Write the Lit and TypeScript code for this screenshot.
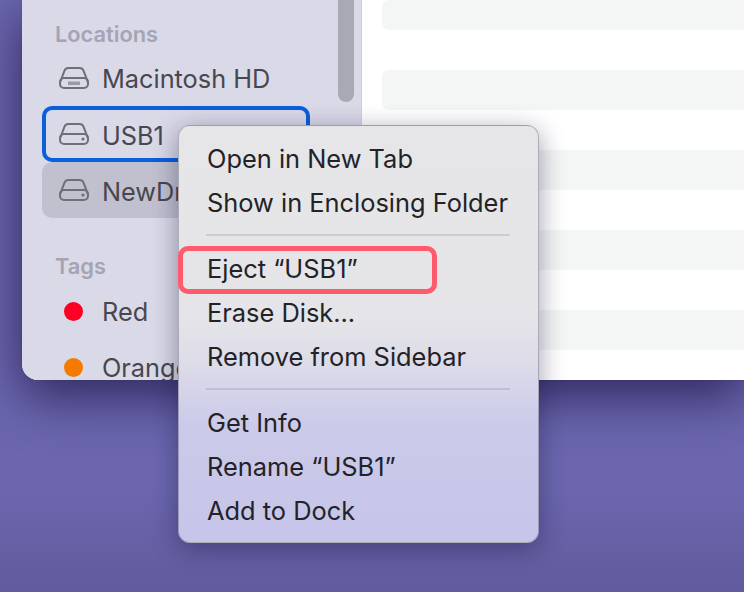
import { LitElement, html, css, svg } from "lit";
import { customElement } from "lit/decorators.js";

const driveIcon = (internal: boolean) => html`<svg class="drive" viewBox="0 0 30 22" width="30" height="22" fill="none" stroke="currentColor" stroke-width="2">
  <path d="M1.2 15 L5.4 3.8 Q6.5 1 9.5 1 H20.5 Q23.5 1 24.6 3.8 L28.8 15" />
  <rect x="1" y="11" width="28" height="10" rx="4" />
  ${internal
    ? [10, 12, 14, 16, 18, 20].map((x) => svg`<path d="M${x} 14.5v3.5" stroke-width="1.2" />`)
    : svg`<circle cx="24" cy="16" r="1.6" fill="currentColor" stroke="none" />`}
</svg>`;

const menuGroups = [
  ["Open in New Tab", "Show in Enclosing Folder"],
  ["Eject “USB1”", "Erase Disk...", "Remove from Sidebar"],
  ["Get Info", "Rename “USB1”", "Add to Dock"],
];

@customElement("app-root")
export class AppRoot extends LitElement {
  static styles = css`
    :host {
      display: block;
      position: relative;
      width: 744px;
      height: 592px;
      overflow: hidden;
      background: linear-gradient(180deg, #6b66ae 0, #6b66ae 490px, #625c9e 585px);
      font-family: Inter, "Liberation Sans", sans-serif;
    }
    .window {
      display: flex;
      height: 380px;
      margin-left: 22px;
      border-bottom-left-radius: 16px;
      overflow: hidden;
      background: #fff;
      box-shadow: 0 16px 50px rgba(28, 22, 70, 0.78), 0 0 1px rgba(28, 22, 70, 0.6);
    }
    .sidebar {
      position: relative;
      flex: 0 0 340px;
      box-sizing: border-box;
      padding: 22px 0 0 20px;
      background: #dad9e7;
      border-right: 1px solid #cfcedf;
      overflow: hidden;
    }
    .heading {
      margin-left: 13px;
      height: 24px;
      line-height: 24px;
      font-size: 21.8px;
      font-weight: 600;
      color: #a5a4b4;
    }
    .heading.locations {
      margin-bottom: 4px;
    }
    .heading.tags {
      margin-top: 36px;
      margin-bottom: 5px;
    }
    .row {
      display: flex;
      align-items: center;
      gap: 13px;
      box-sizing: border-box;
      width: 268px;
      height: 56px;
      padding-left: 17px;
      border-radius: 10px;
      font-size: 25.3px;
      color: #47474e;
    }
    .row.focused {
      border: 4px solid #0a5fdb;
      padding-left: 13px;
    }
    .row.selected {
      background: #c1c0cf;
    }
    .row.focused .label,
    .row.selected .label {
      position: relative;
      top: 1px;
    }
    .drive {
      flex: none;
      color: #6f6f78;
    }
    .dot-cell {
      flex: none;
      display: flex;
      justify-content: center;
      width: 28px;
      margin-right: 2px;
    }
    .dot {
      width: 19px;
      height: 19px;
      border-radius: 50%;
    }
    .scrollbar {
      position: absolute;
      top: -8px;
      left: 316px;
      width: 16px;
      height: 110px;
      border-radius: 8px;
      background: #a9a8b5;
    }
    .content {
      flex: 1;
      display: flex;
      flex-direction: column;
      gap: 40px;
      padding-left: 20px;
    }
    .stripe {
      height: 40px;
      flex: none;
      background: #f4f5f5;
      border-radius: 7px 0 0 7px;
    }
    .stripe.first {
      height: 30px;
    }
    .menu {
      position: absolute;
      left: 178px;
      top: 125px;
      width: 361px;
      height: 418px;
      box-sizing: border-box;
      padding: 11px 0 0 28px;
      border: 1px solid rgba(90, 90, 110, 0.4);
      border-radius: 12px;
      background: linear-gradient(
        180deg,
        #e6e6e9 0,
        #e5e5e9 190px,
        #dcdbe9 240px,
        #cbcaea 300px,
        #c6c5ea 418px
      );
      box-shadow: 0 6px 26px rgba(20, 20, 60, 0.42);
    }
    .item {
      height: 44px;
      line-height: 44px;
      font-size: 25.4px;
      color: #232327;
      white-space: nowrap;
    }
    .sep {
      width: 304px;
      height: 2px;
      margin: 9px 0 11px -1px;
      background: rgba(60, 60, 90, 0.14);
    }
    .callout {
      position: absolute;
      left: 178px;
      top: 246px;
      width: 259px;
      height: 48px;
      box-sizing: border-box;
      border: 5px solid #ff5a6e;
      border-radius: 10px;
    }
  `;

  render() {
    return html`
      <div class="window">
        <aside class="sidebar">
          <div class="scrollbar"></div>
          <div class="heading locations">Locations</div>
          <div class="row">${driveIcon(true)}<span class="label">Macintosh HD</span></div>
          <div class="row focused">${driveIcon(false)}<span class="label">USB1</span></div>
          <div class="row selected">${driveIcon(false)}<span class="label">NewDrive</span></div>
          <div class="heading tags">Tags</div>
          ${[
            ["Red", "#fe0024"],
            ["Orange", "#f57a00"],
          ].map(
            ([name, color]) => html`<div class="row">
              <span class="dot-cell"><span class="dot" style="background:${color}"></span></span>
              <span class="label">${name}</span>
            </div>`
          )}
        </aside>
        <main class="content">
          <div class="stripe first"></div>
          <div class="stripe"></div>
          <div class="stripe"></div>
          <div class="stripe"></div>
          <div class="stripe"></div>
        </main>
      </div>
      <div class="menu">
        ${menuGroups.map(
          (group, i) => html`
            ${i > 0 ? html`<div class="sep"></div>` : ""}
            ${group.map((label) => html`<div class="item">${label}</div>`)}
          `
        )}
      </div>
      <div class="callout"></div>
    `;
  }
}
